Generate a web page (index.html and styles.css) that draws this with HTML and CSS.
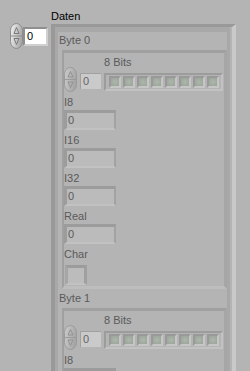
FILE: index.html
```html
<!DOCTYPE html>
<html lang="de">
<head>
    <meta charset="UTF-8">
    <meta name="viewport" content="width=device-width, initial-scale=1.0">
    <title>Daten</title>
    <link rel="stylesheet" href="styles.css">
</head>
<body>

    <div class="panel">
        <div class="array-label">Daten</div>
        <div class="array-row">

            <!-- Array index -->
            <div class="index">
                <svg class="spin" width="13" height="26" viewBox="0 0 13 26">
                    <defs>
                        <linearGradient id="spinOn" x1="0" x2="1" y1="0" y2="0.3">
                            <stop offset="0" stop-color="#f4f4f4"/>
                            <stop offset="1" stop-color="#a9a9a9"/>
                        </linearGradient>
                        <linearGradient id="spinOff" x1="0" x2="1" y1="0" y2="0.3">
                            <stop offset="0" stop-color="#cdcdcd"/>
                            <stop offset="1" stop-color="#a5a5a5"/>
                        </linearGradient>
                    </defs>
                    <rect x="0.5" y="0.5" width="12" height="25" rx="6" ry="7" fill="url(#spinOn)" stroke="#8c8c8c"/>
                    <path d="M1 13H12" stroke="#8c8c8c"/>
                    <path d="M6.5 4.5L9 10.5H4Z" fill="none" stroke="#7a7a7a"/>
                    <path d="M6.5 21.5L9 15.5H4Z" fill="none" stroke="#7a7a7a"/>
                </svg>
                <div class="index-box">0</div>
            </div>

            <!-- Array frame -->
            <div class="array-frame">
                <div class="element">

                    <div class="lbl">Byte 0</div>
                    <div class="byte">
                        <div class="bits-lbl">8 Bits</div>
                        <div class="bits">
                            <svg class="spin small" width="13" height="25" viewBox="0 0 13 25">
                                <rect x="0.5" y="0.5" width="12" height="24" rx="6" ry="7" fill="url(#spinOff)" stroke="#9a9a9a"/>
                                <path d="M1 12.5H12" stroke="#9a9a9a"/>
                                <path d="M6.5 4.5L9 10H4Z" fill="none" stroke="#929292"/>
                                <path d="M6.5 20.5L9 15H4Z" fill="none" stroke="#929292"/>
                            </svg>
                            <div class="bit-index">0</div>
                            <div class="leds">
                                <span class="led"></span><span class="led"></span><span class="led"></span><span class="led"></span>
                                <span class="led"></span><span class="led"></span><span class="led"></span><span class="led"></span>
                            </div>
                        </div>
                        <div class="lbl">I8</div>
                        <div class="num">0</div>
                        <div class="lbl">I16</div>
                        <div class="num">0</div>
                        <div class="lbl">I32</div>
                        <div class="num">0</div>
                        <div class="lbl">Real</div>
                        <div class="num">0</div>
                        <div class="lbl">Char</div>
                        <div class="chr"></div>
                    </div>

                    <div class="lbl">Byte 1</div>
                    <div class="byte">
                        <div class="bits-lbl">8 Bits</div>
                        <div class="bits">
                            <svg class="spin small" width="13" height="25" viewBox="0 0 13 25">
                                <rect x="0.5" y="0.5" width="12" height="24" rx="6" ry="7" fill="url(#spinOff)" stroke="#9a9a9a"/>
                                <path d="M1 12.5H12" stroke="#9a9a9a"/>
                                <path d="M6.5 4.5L9 10H4Z" fill="none" stroke="#929292"/>
                                <path d="M6.5 20.5L9 15H4Z" fill="none" stroke="#929292"/>
                            </svg>
                            <div class="bit-index">0</div>
                            <div class="leds">
                                <span class="led"></span><span class="led"></span><span class="led"></span><span class="led"></span>
                                <span class="led"></span><span class="led"></span><span class="led"></span><span class="led"></span>
                            </div>
                        </div>
                        <div class="lbl">I8</div>
                        <div class="num-stub"></div>
                    </div>

                </div>
            </div>

        </div>
    </div>

</body>
</html>
```

FILE: styles.css
```css
body {
    margin: 0;
    background-color: #b4b4b4;
    font-family: "Liberation Sans", Arial, sans-serif;
    font-size: 11px;
    line-height: 13px;
    color: #5a5a5a;
    overflow: hidden;
}

.panel {
    padding-top: 10px;
    height: 361px;
    overflow: hidden;
}

.array-label {
    margin-left: 51px;
    color: #000;
}

.array-row {
    display: flex;
    align-items: flex-start;
}

/* Index control on the left */
.index {
    display: flex;
    align-items: center;
    margin-left: 10px;
    margin-right: 3px;
}

.spin {
    display: block;
    flex: none;
}

.index-box {
    box-sizing: border-box;
    width: 25px;
    height: 19px;
    padding-left: 2px;
    line-height: 15px;
    background-color: #fff;
    color: #000;
    border: 2px solid;
    border-color: #8f8f8f #d0d0d0 #d0d0d0 #8f8f8f;
}

/* Array frame */
.array-frame {
    box-sizing: border-box;
    width: 185px;
    margin-top: 1px;
    padding-right: 2px;
    border-top: 3px solid #999;
    border-left: 4px solid #999;
    border-right: 4px solid #c9c9c9;
}

.element {
    padding-top: 2px;
    padding-left: 1px;
    border-top: 5px solid #a8a8a8;
    border-left: 3px solid #a8a8a8;
    border-right: 3px solid #a8a8a8;
}

/* Byte clusters */
.byte {
    margin: 3px 0 3px 3px;
    padding-bottom: 1px;
    border-style: solid;
    border-width: 3px 3px 3px 2px;
    border-color: #a0a0a0 #a6a6a6 #bdbdbd #a0a0a0;
}

.bits-lbl {
    margin-top: 3px;
    padding-left: 40px;
    line-height: 12px;
}

.bits {
    display: flex;
    align-items: flex-start;
    height: 25px;
    margin-top: -1px;
    margin-bottom: 2px;
}

.bit-index {
    box-sizing: border-box;
    width: 21px;
    height: 16px;
    margin: 6px 0 0 3px;
    padding-left: 2px;
    line-height: 15px;
    background-color: #cacaca;
    color: #666;
    border-top: 1px solid #a0a0a0;
    border-left: 1px solid #a0a0a0;
}

.leds {
    box-sizing: border-box;
    display: flex;
    gap: 2px;
    width: 119px;
    height: 18px;
    margin: 6px 0 0 3px;
    padding: 1px 2px 1px 3px;
    border: 2px solid;
    border-color: #9c9c9c #c2c2c2 #c2c2c2 #9c9c9c;
}

.led {
    box-sizing: border-box;
    width: 12px;
    height: 12px;
    border: 2px solid;
    border-color: #999 #c6c6c6 #c6c6c6 #999;
    background: radial-gradient(circle, #aeb7ac 0%, #99a397 100%);
}

.lbl {
    margin-top: 4px;
}

.element > .lbl {
    margin-top: 0;
}

.num {
    box-sizing: border-box;
    width: 52px;
    height: 20px;
    margin-top: 1px;
    padding-left: 1px;
    line-height: 15px;
    background-color: #bbbbbb;
    border-style: solid;
    border-width: 3px 2px 2px 3px;
    border-color: #9c9c9c #a2a2a2 #c2c2c2 #9c9c9c;
}

/* top edge of the next indicator, cut by the window */
.num-stub {
    box-sizing: border-box;
    width: 52px;
    height: 20px;
    margin-top: 1px;
    border-top: 3px solid #9c9c9c;
    border-left: 3px solid #9c9c9c;
}

.chr {
    box-sizing: border-box;
    width: 22px;
    height: 20px;
    margin: 4px 0 0 1px;
    background-color: #bcbcbc;
    border-style: solid;
    border-width: 3px 3px 2px 3px;
    border-color: #9c9c9c #a0a0a0 #c2c2c2 #a6a6a6;
}
```
